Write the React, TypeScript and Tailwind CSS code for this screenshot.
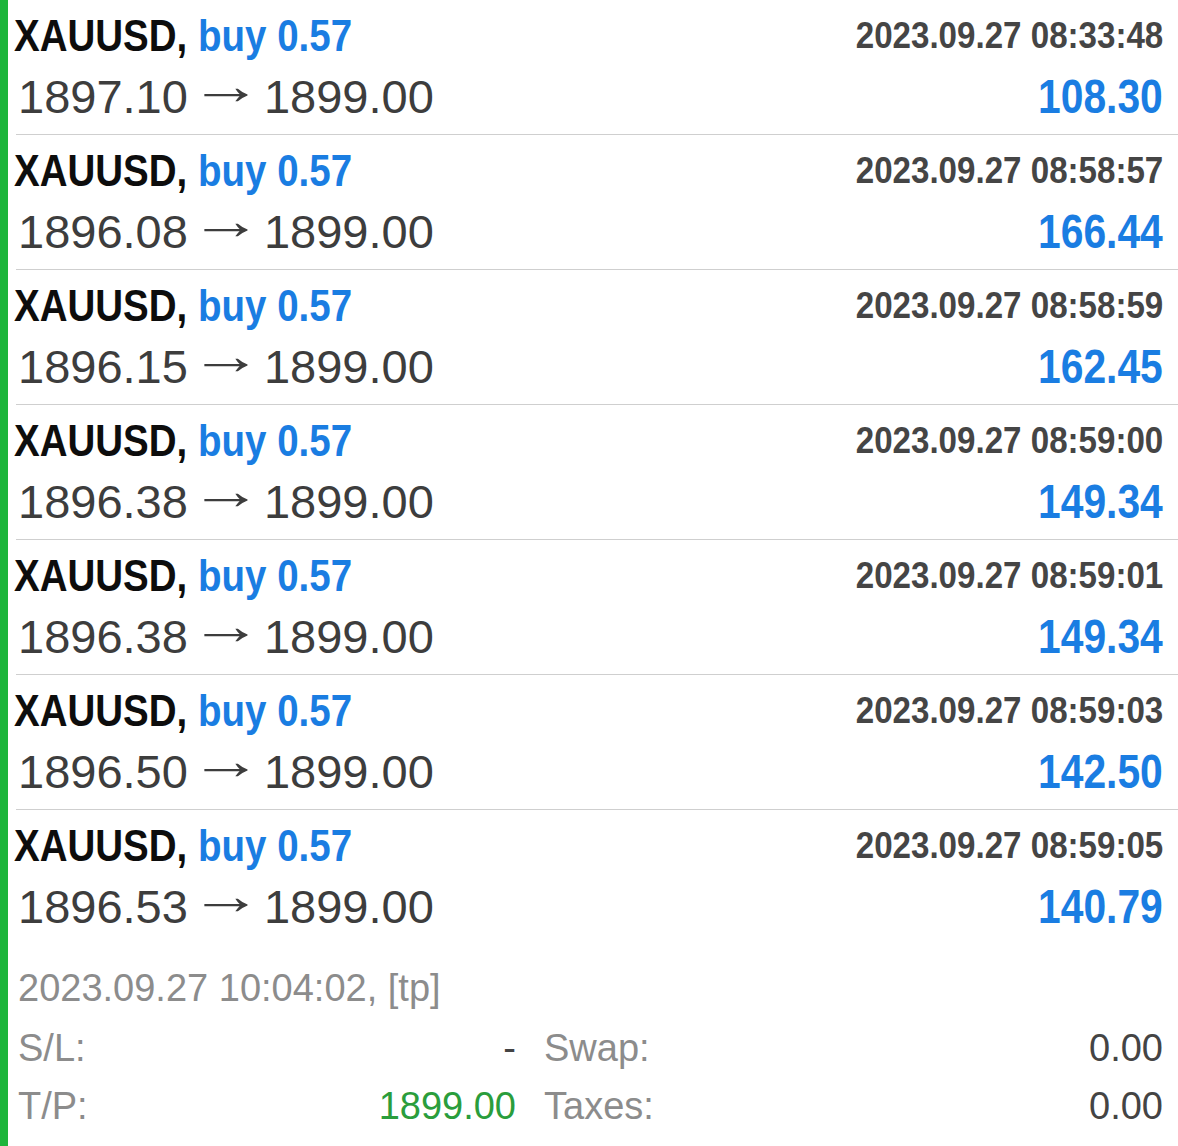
import React from "react";

const rows = [
  { open: "1897.10", time: "2023.09.27 08:33:48", profit: "108.30" },
  { open: "1896.08", time: "2023.09.27 08:58:57", profit: "166.44" },
  { open: "1896.15", time: "2023.09.27 08:58:59", profit: "162.45" },
  { open: "1896.38", time: "2023.09.27 08:59:00", profit: "149.34" },
  { open: "1896.38", time: "2023.09.27 08:59:01", profit: "149.34" },
  { open: "1896.50", time: "2023.09.27 08:59:03", profit: "142.50" },
  { open: "1896.53", time: "2023.09.27 08:59:05", profit: "140.79" },
];

const font = { fontFamily: '"Liberation Sans", Arial, sans-serif' };

function Row({ open, time, profit, last }: { open: string; time: string; profit: string; last: boolean }) {
  return (
    <div className={`pt-[6px] pb-[6px] pr-[15px] ${last ? "" : "border-b border-[#cfcfcf]"}`}>
      <div className="flex items-baseline justify-between h-[60px] leading-[60px]">
        <span className="inline-block origin-left scale-x-[0.875] whitespace-nowrap text-[44px] font-bold -ml-[2px]">
          <span className="text-[#0d0d0d]">XAUUSD,</span> <span className="text-[#1a7de2]">buy 0.57</span>
        </span>
        <span className="inline-block origin-right scale-x-[0.92] whitespace-nowrap text-[36px] font-bold text-[#454545] relative -top-[3px]">
          {time}
        </span>
      </div>
      <div className="flex items-baseline justify-between h-[62px] leading-[62px]">
        <span className="whitespace-nowrap text-[47px] text-[#3d3d3d] ml-[2px]">
          {open}
          <span className="inline-block w-[76px] text-center relative -top-[9px]">
            <span className="inline-block scale-x-[1.35] text-[54px] leading-none"> → </span>
          </span>
          1899.00
        </span>
        <span className="inline-block origin-right scale-x-[0.85] whitespace-nowrap text-[48px] font-bold text-[#1a7de2]">
          {profit}
        </span>
      </div>
    </div>
  );
}

export default function App() {
  return (
    <div className="w-[1178px] h-[1146px] bg-white flex overflow-hidden" style={font}>
      <div className="w-[8px] bg-[#1db53b] shrink-0" />
      <div className="flex-1 pl-[8px]">
        <div>
          {rows.map((r, i) => (
            <Row key={i} {...r} last={i === rows.length - 1} />
          ))}
        </div>
        <div className="pt-[14px] pl-[2px] pr-[15px] text-[38px] leading-[58px]">
          <div className="text-[#8c8c8c] whitespace-nowrap leading-[61px]">2023.09.27 10:04:02, [tp]</div>
          <div className="grid grid-cols-[498px_1fr] gap-x-[28px]">
            <div className="flex justify-between">
              <span className="text-[#8c8c8c]">S/L:</span>
              <span className="text-[#444]">-</span>
            </div>
            <div className="flex justify-between">
              <span className="text-[#8c8c8c]">Swap:</span>
              <span className="text-[#444]">0.00</span>
            </div>
            <div className="flex justify-between">
              <span className="text-[#8c8c8c]">T/P:</span>
              <span className="text-[#2a9d3c]">1899.00</span>
            </div>
            <div className="flex justify-between">
              <span className="text-[#8c8c8c]">Taxes:</span>
              <span className="text-[#444]">0.00</span>
            </div>
          </div>
        </div>
      </div>
    </div>
  );
}
